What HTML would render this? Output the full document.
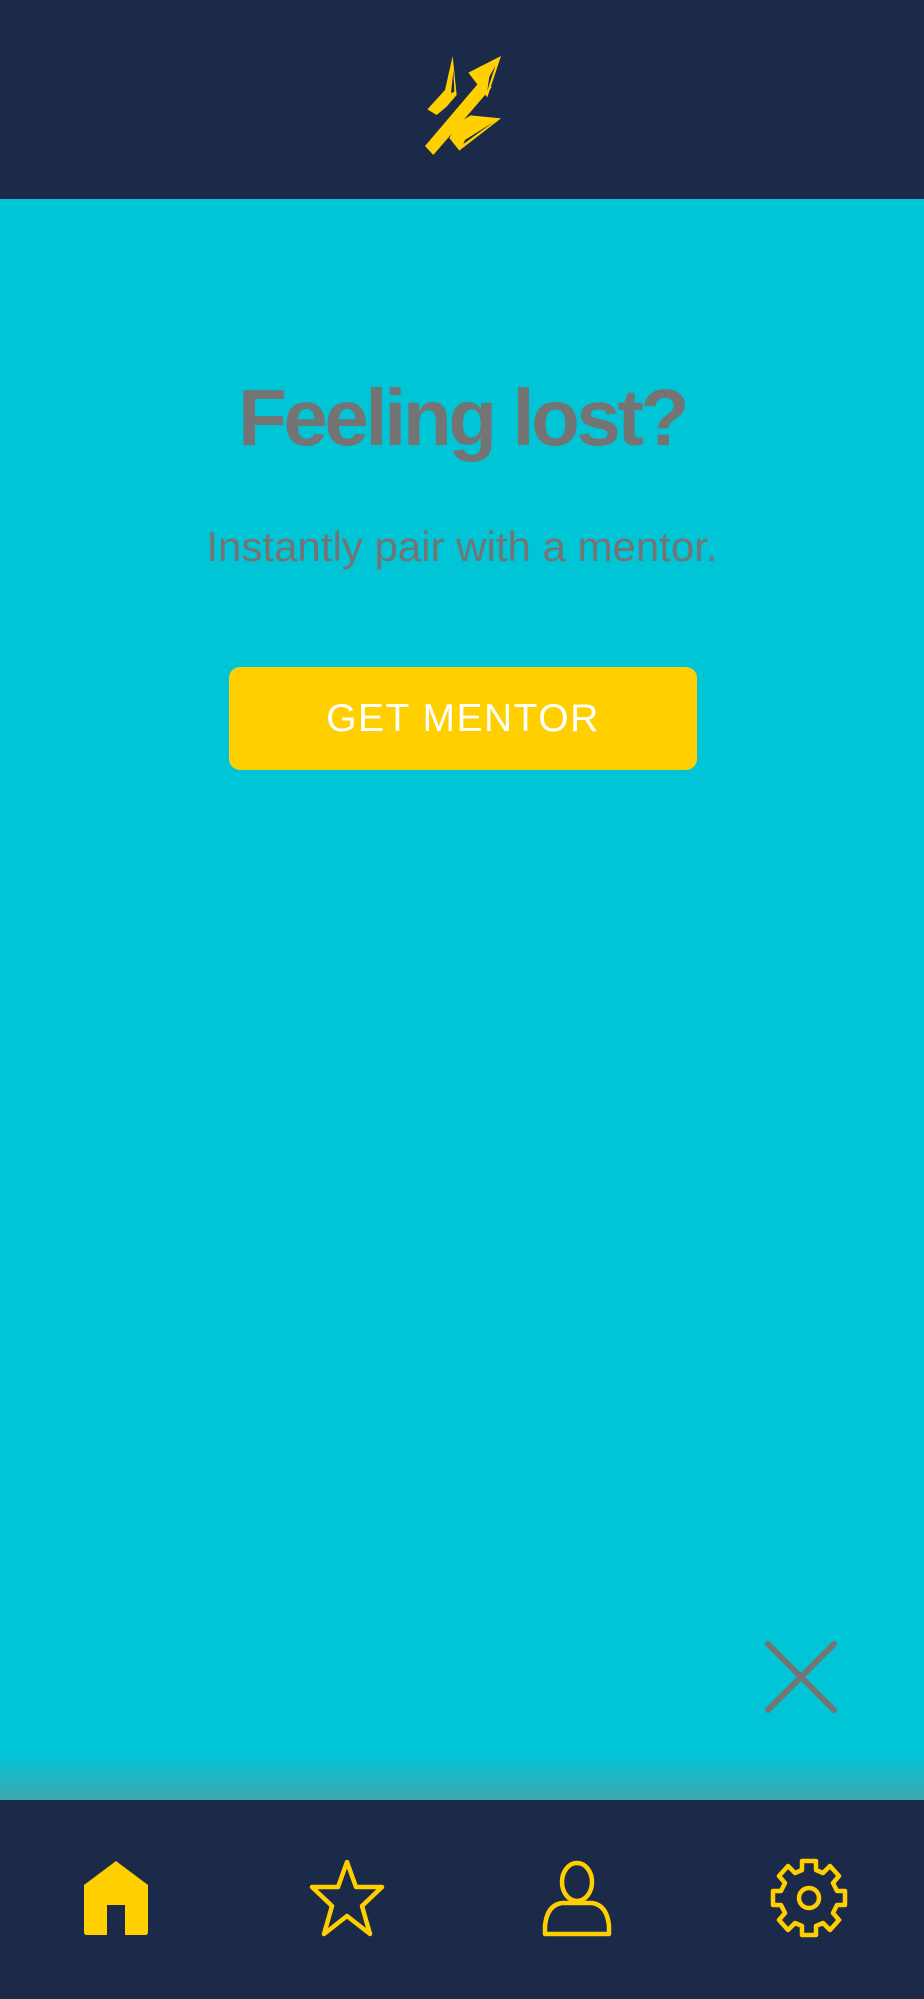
<!DOCTYPE html>
<html><head><meta charset="utf-8"><style>
html,body{margin:0;padding:0;width:924px;height:1999px;overflow:hidden;background:#00c5d7;font-family:"Liberation Sans",sans-serif}
.hdr{position:absolute;left:0;top:0;width:924px;height:199px;background:#1a2a48}
.title{position:absolute;left:0;width:924px;top:368px;text-align:center;font-size:80px;font-weight:bold;color:#747474;letter-spacing:-3.5px;line-height:100px}
.sub{position:absolute;left:0;width:924px;top:522px;text-align:center;font-size:42px;color:#747474;line-height:50px}
.btn{position:absolute;left:229px;top:667px;width:468px;height:103px;background:#ffcf00;border-radius:11px;color:#fff;font-size:39px;text-align:center;line-height:103px;letter-spacing:1.5px}
.shade{position:absolute;left:0;top:1755px;width:924px;height:45px;background:linear-gradient(#00c5d700,#3fa5ad)}
.nav{position:absolute;left:0;top:1800px;width:924px;height:199px;background:#1a2a48}
svg{position:absolute}
</style></head><body>
<div class="hdr"></div>
<svg style="left:400px;top:40px" width="120" height="130" viewBox="0 0 360 390">
<g fill="#ffcf00">
<polygon points="75,318 245,118 275,142 100,345"/>
<polygon points="205,98 303,48 262,172"/>
<polygon points="158,48 170,165 140,200 110,225 82,208 135,150"/>
<polygon points="172,250 212,226 303,235 178,332 148,294"/>
</g>
<g fill="#1a2a48">
<polygon points="160,92 163,155 153,160"/>
<polygon points="286,78 262,152 268,110"/>
<polygon points="282,245 190,312 195,300"/>
</g>
</svg>
<div class="title">Feeling lost?</div>
<div class="sub">Instantly pair with a mentor.</div>
<div class="btn">GET MENTOR</div>
<svg style="left:760px;top:1636px" width="82" height="82" viewBox="0 0 82 82"><path d="M8 8L74 74M74 8L8 74" stroke="#747474" stroke-width="6" stroke-linecap="round"/></svg>
<div class="shade"></div>
<div class="nav"></div>
<svg style="left:80px;top:1858px" width="72" height="80" viewBox="0 0 72 80"><path d="M36 3L68 27V74Q68 77 65 77H45V47H27V77H7Q4 77 4 74V27Z" fill="#ffcf00"/></svg>
<svg style="left:305px;top:1858px" width="84" height="80" viewBox="0 0 84 80"><path d="M42 4L51 29H77L57 48L65 76L42 58L19 76L27 48L7 29H33Z" fill="none" stroke="#ffcf00" stroke-width="4.5" stroke-linejoin="round"/></svg>
<svg style="left:540px;top:1860px" width="74" height="78" viewBox="0 0 74 78"><ellipse cx="37" cy="22" rx="15" ry="19" fill="none" stroke="#ffcf00" stroke-width="4.5"/><path d="M5 74V66Q7 45 22 43H52Q67 45 69 66V74Z" fill="none" stroke="#ffcf00" stroke-width="4.5" stroke-linejoin="round"/></svg>
<svg style="left:768px;top:1858px" width="82" height="80" viewBox="-41 -40 82 80"><g fill="none" stroke="#ffcf00" stroke-width="4.5" stroke-linejoin="round"><path d="M-7-37H7V-28L14-25L21-32L30-22L24-15L28-7H36V7H28L24 15L30 22L21 32L14 25L7 28V37H-7V28L-14 25L-21 32L-30 22L-24 15L-28 7H-36V-7H-28L-24-15L-30-22L-21-32L-14-25L-7-28Z"/><circle r="10"/></g></svg>
</body></html>
